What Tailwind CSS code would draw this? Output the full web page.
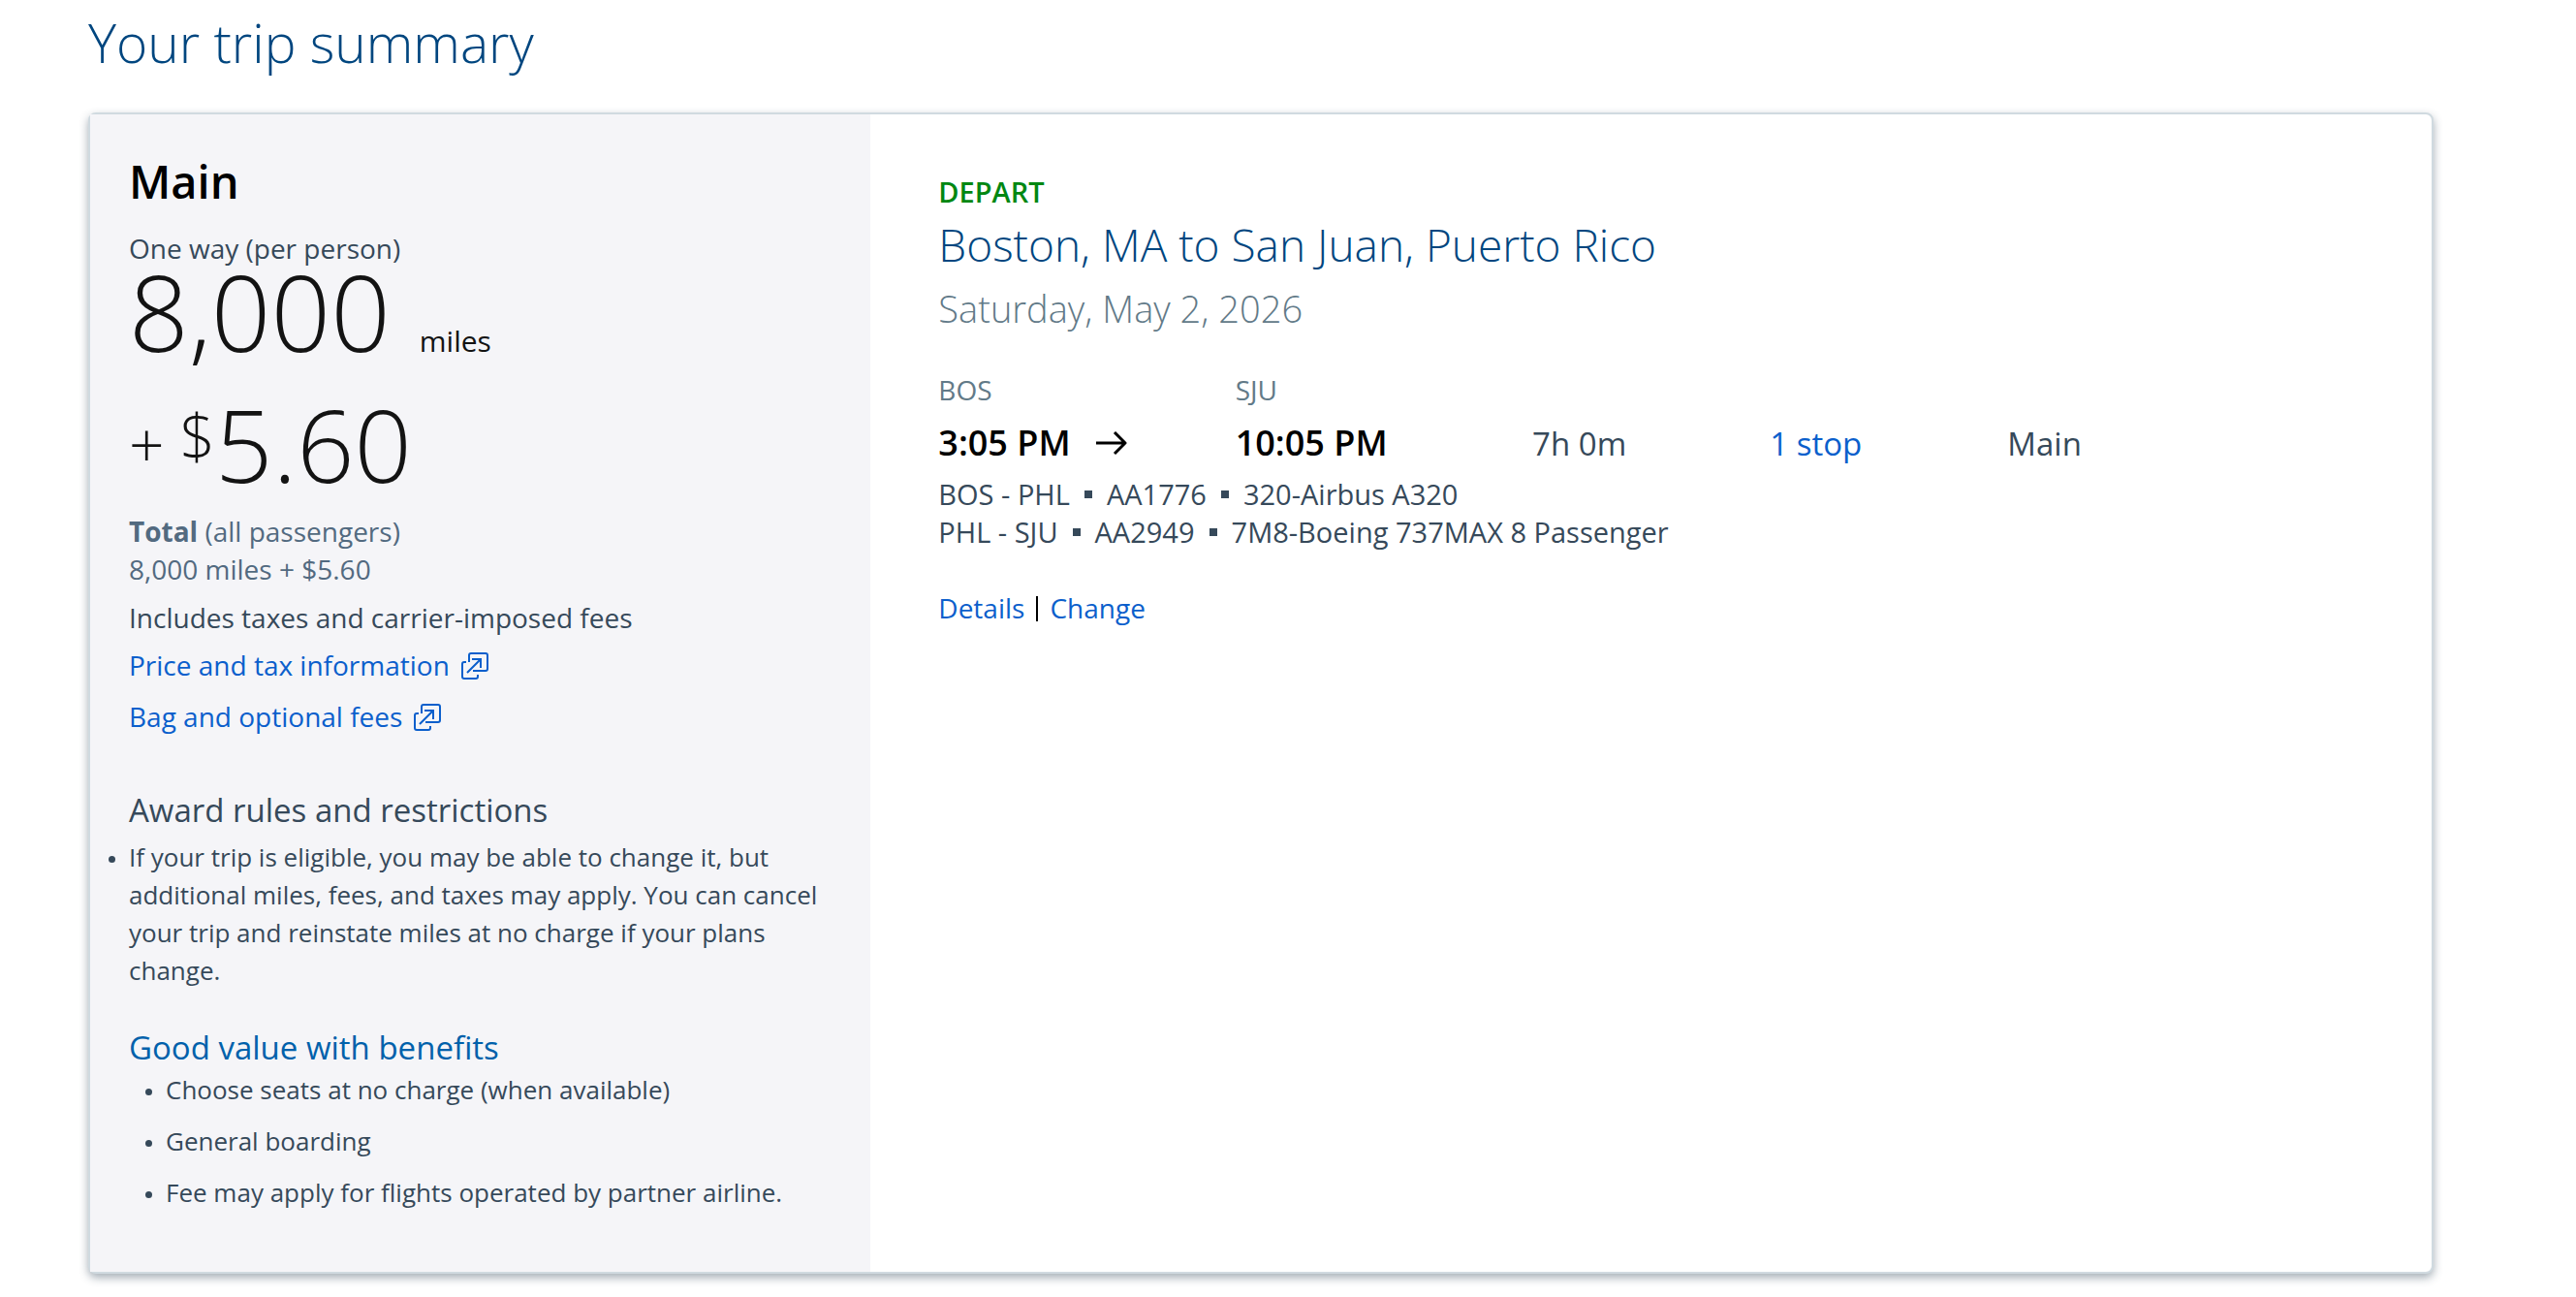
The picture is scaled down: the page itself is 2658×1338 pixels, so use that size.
<!DOCTYPE html>
<html lang="en">
<head>
  <meta charset="UTF-8" />
  <meta name="viewport" content="width=device-width, initial-scale=1.0"/>
  <title>Your trip summary</title>
  <script src="https://cdn.jsdelivr.net/npm/@tailwindcss/browser@4"></script>
</head>
<body class="bg-white text-[#36495a] font-['Open_Sans','Noto_Sans',sans-serif] text-[28px] leading-[39px]">

  <main class="pt-[10px] pb-6 pl-[91px] pr-[147px]">
    <h1 class="text-[55px] leading-[68px] font-light text-[#00467f] mb-[38px]">Your trip summary</h1>

    <section class="grid grid-cols-3 bg-white border-2 border-[#d0dae0] rounded-lg shadow-[0_4px_10px_rgba(54,73,90,0.45)]">

      <!-- Fare -->
      <div class="bg-[#f5f5f8] pt-[41px] pb-[62px] pl-10 pr-11">
        <h2 class="text-[47px] leading-[56px] font-semibold text-black">Main</h2>
        <p class="mt-[23px] leading-9">One way (per person)</p>
        <p class="flex items-baseline gap-[30px] text-[#131313]">
          <span class="text-[108px] leading-[96px] font-light">8,000</span>
          <span class="text-[30px] leading-9">miles</span>
        </p>
        <p class="flex items-start mt-10 text-[#131313] font-light">
          <span class="text-[64px] leading-[96px] mr-4">+</span>
          <span class="text-[64px] leading-[80px]">$</span>
          <span class="text-[104px] leading-[96px]">5.60</span>
        </p>

        <div class="mt-[23px] text-[#526a80]">
          <p><span class="font-bold">Total</span> (all passengers)</p>
          <p>8,000 miles + $5.60</p>
        </div>
        <p class="mt-[11px]">Includes taxes and carrier-imposed fees</p>
        <p class="mt-[10px]">
          <a href="#" class="inline-flex items-center gap-3 text-[#0b5fcc]">
            Price and tax information
            <svg class="w-7 h-7" viewBox="0 0 28 28" fill="none" stroke="currentColor" stroke-width="2"><path d="M8 10V3a2 2 0 0 1 2-2h15a2 2 0 0 1 2 2v14a2 2 0 0 1-2 2H12"/><path d="M5 10H3a2 2 0 0 0-2 2v13a2 2 0 0 0 2 2h12a2 2 0 0 0 2-2v-2"/><path d="M6 21 20 7M11 7h9v9"/></svg>
          </a>
        </p>
        <p class="mt-[14px]">
          <a href="#" class="inline-flex items-center gap-3 text-[#0b5fcc]">
            Bag and optional fees
            <svg class="w-7 h-7" viewBox="0 0 28 28" fill="none" stroke="currentColor" stroke-width="2"><path d="M8 10V3a2 2 0 0 1 2-2h15a2 2 0 0 1 2 2v14a2 2 0 0 1-2 2H12"/><path d="M5 10H3a2 2 0 0 0-2 2v13a2 2 0 0 0 2 2h12a2 2 0 0 0 2-2v-2"/><path d="M6 21 20 7M11 7h9v9"/></svg>
          </a>
        </p>

        <h3 class="mt-[55px] text-[33px] leading-[44px]">Award rules and restrictions</h3>
        <ul class="mt-[7px] list-disc text-[26px] marker:text-[20px]">
          <li>If your trip is eligible, you may be able to change it, but additional miles, fees, and taxes may apply. You can cancel your trip and reinstate miles at no charge if your plans change.</li>
        </ul>

        <h3 class="mt-[38px] text-[33px] leading-[44px] text-[#0061ab]">Good value with benefits</h3>
        <ul class="mt-[2px] pl-[38px] list-disc text-[26px] marker:text-[20px] flex flex-col gap-[14px]">
          <li>Choose seats at no charge (when available)</li>
          <li>General boarding</li>
          <li>Fee may apply for flights operated by partner airline.</li>
        </ul>
      </div>

      <!-- Flight -->
      <div class="col-span-2 pt-[62px] px-[70px]">
        <p class="text-[29px] leading-9 font-semibold text-[#008712]">DEPART</p>
        <h2 class="mt-[6px] text-[46px] leading-[60px] font-light text-[#00467f]">Boston, MA to San Juan, Puerto Rico</h2>
        <p class="mt-[10px] text-[38px] leading-[52px] font-light text-[#627a88]">Saturday, May 2, 2026</p>

        <div class="mt-[39px] grid grid-cols-[5fr_5fr_4fr_4fr_6fr] items-baseline gap-y-[10px] text-[33px] leading-[50px]">
          <span class="text-[28px] leading-[39px] text-[#627a88]">BOS</span>
          <span class="col-span-4 text-[28px] leading-[39px] text-[#627a88]">SJU</span>
          <span class="flex items-center gap-[26px] text-[36px] font-semibold text-black">
            3:05 PM
            <svg class="w-8 h-6" viewBox="0 0 32 24" fill="none" stroke="currentColor" stroke-width="3" stroke-linejoin="round"><path d="M0 12h30M19 1l11 11-11 11"/></svg>
          </span>
          <span class="text-[36px] font-semibold text-black">10:05 PM</span>
          <span>7h 0m</span>
          <a href="#" class="text-[#0b5fcc]">1 stop</a>
          <span>Main</span>
        </div>

        <div class="mt-[7px] text-[29px]">
          <p class="flex items-center gap-[15px]">
            <span>BOS - PHL</span><span class="w-2 h-2 bg-[#36495a]"></span>
            <span>AA1776</span><span class="w-2 h-2 bg-[#36495a]"></span>
            <span>320-Airbus A320</span>
          </p>
          <p class="flex items-center gap-[15px]">
            <span>PHL - SJU</span><span class="w-2 h-2 bg-[#36495a]"></span>
            <span>AA2949</span><span class="w-2 h-2 bg-[#36495a]"></span>
            <span>7M8-Boeing 737MAX 8 Passenger</span>
          </p>
        </div>

        <p class="mt-10 flex items-center gap-3">
          <a href="#" class="text-[#0b5fcc]">Details</a>
          <span class="w-[2px] h-[26px] bg-black"></span>
          <a href="#" class="text-[#0b5fcc]">Change</a>
        </p>
      </div>
    </section>
  </main>

</body>
</html>
